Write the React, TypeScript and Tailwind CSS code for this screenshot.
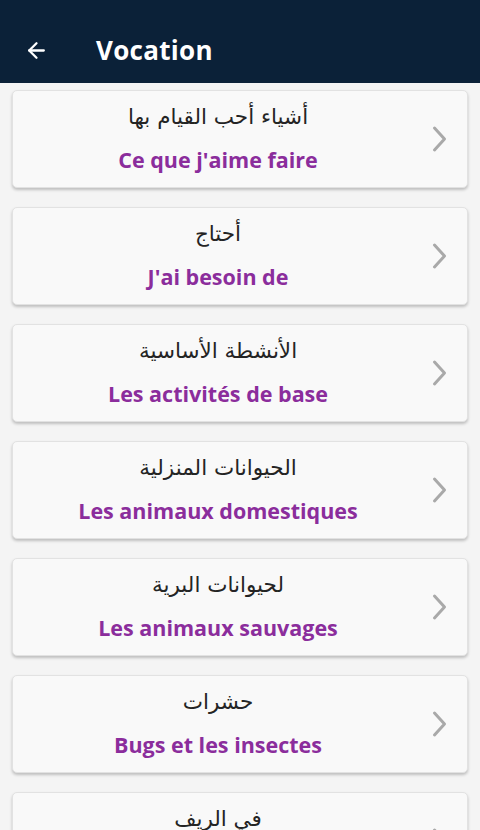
import { ArrowLeft } from "lucide-react";

const items = [
  { ar: "أشياء أحب القيام بها", fr: "Ce que j'aime faire" },
  { ar: "أحتاج", fr: "J'ai besoin de" },
  { ar: "الأنشطة الأساسية", fr: "Les activités de base" },
  { ar: "الحيوانات المنزلية", fr: "Les animaux domestiques" },
  { ar: "لحيوانات البرية", fr: "Les animaux sauvages" },
  { ar: "حشرات", fr: "Bugs et les insectes" },
  { ar: "في الريف", fr: "À la campagne" },
];

const App = () => {
  return (
    <div className="h-[830px] w-[480px] overflow-hidden bg-[#f4f4f4] font-['Open_Sans',sans-serif]">
      <div className="flex h-[83px] items-center bg-[#0b2138] pt-[18px] text-white">
        <ArrowLeft className="ml-[24px] h-[25px] w-[25px]" strokeWidth={2.2} />
        <h1 className="ml-[47px] text-[26px] font-bold tracking-[0.3px]">Vocation</h1>
      </div>
      <div className="flex flex-col gap-[19px] px-[12px] pt-[7px]">
        {items.map((item, index) => (
          <div
            key={index}
            className="flex h-[98px] shrink-0 items-center rounded-[5px] border border-[#e2e2e2] bg-[#f9f9f9] shadow-[0_2px_3px_rgba(0,0,0,0.22)]"
          >
            <div className="flex h-full flex-grow flex-col items-center pt-[11px] pr-[8px]">
              <p
                dir="rtl"
                className="h-[30px] font-['DejaVu_Sans',sans-serif] text-[21.5px] font-medium leading-[30px] text-[#242424]"
              >
                {item.ar}
              </p>
              <p className="mt-[14px] text-[21.5px] font-bold leading-[28px] text-[#8b2d9c]">{item.fr}</p>
            </div>
            <svg width="18" height="28" viewBox="0 0 18 28" className="mr-[18px] shrink-0" fill="none">
              <path d="M3.5 3 L13.5 14 L3.5 25" stroke="#a9a9a9" strokeWidth="3" strokeLinecap="round" strokeLinejoin="round" />
            </svg>
          </div>
        ))}
      </div>
    </div>
  );
};

export default App;
